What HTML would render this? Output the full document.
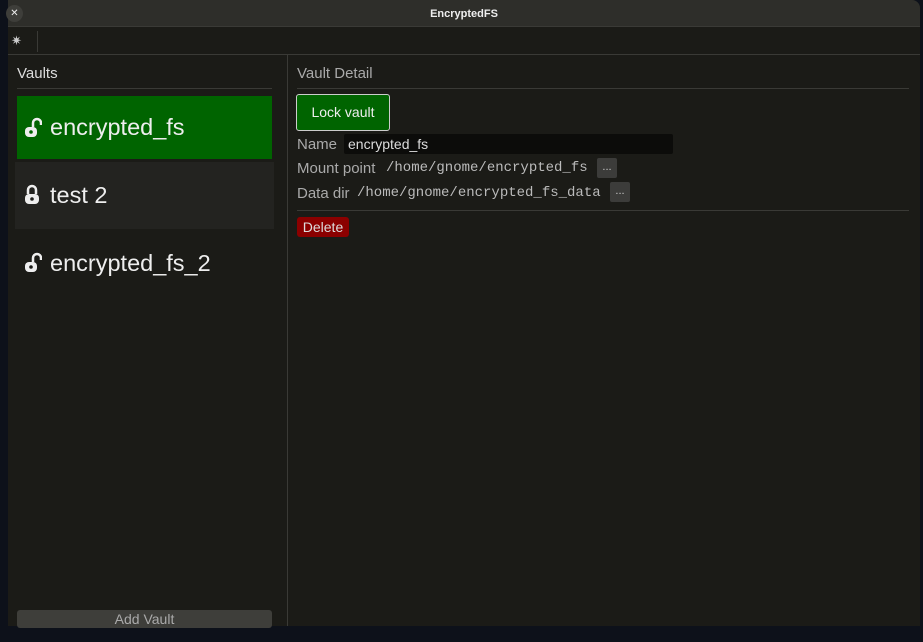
<!DOCTYPE html>
<html><head><meta charset="utf-8"><style>
*{margin:0;padding:0;box-sizing:border-box}
body{width:923px;height:642px;background:#0d111a;position:relative;overflow:hidden;font-family:"Liberation Sans",sans-serif;color:#ddd}
.win{position:absolute;left:8px;top:0;width:912px;height:626px;background:#1b1b17;border-radius:0 8px 0 0}
.tb{position:absolute;left:0;top:0;width:100%;height:27px;background:#2e2e2a;border-bottom:1px solid #3a3a36;text-align:center;font-size:11px;font-weight:bold;line-height:28px;color:#eee;border-radius:0 8px 0 0}
.x{position:absolute;left:-2px;top:5px;width:17px;height:17px;border-radius:50%;background:#3e3e3a;color:#eee;font-size:10px;line-height:17px;text-align:center;font-weight:normal}
.tool{position:absolute;left:0;top:28px;width:100%;height:27px;border-bottom:1px solid #3a3a36}
.abs{position:absolute}
.hl{position:absolute;height:1px;background:#3a3a36}
.lbl{font-size:15px;color:#aaa}
.mono{font-family:"Liberation Mono",monospace;font-size:14px;color:#bbb}
.dots{position:absolute;width:20px;height:20px;background:#3c3c3a;border-radius:2px;color:#ccc;font-size:11px;text-align:center;line-height:18px}
.item{position:absolute;left:9px;width:255px;font-size:23.5px;color:#eee;padding-left:33px}
</style></head><body>
<div class="win">
<div class="tb">EncryptedFS<div class="x">✕</div></div>
<div class="tool"><span class="abs" style="left:3px;top:5px;font-size:13px;color:#ccc">✷</span><div class="abs" style="left:29px;top:3px;width:1px;height:21px;background:#3a3a36"></div></div>
<div class="abs" style="left:279px;top:55px;width:1px;height:571px;background:#3a3a36"></div>
<div class="abs lbl" style="left:9px;top:65px;color:#ddd">Vaults</div>
<div class="hl" style="left:9px;top:88px;width:255px"></div>
<div class="item" style="top:96px;height:63px;background:#006400;line-height:63px">encrypted_fs</div>
<div class="item" style="top:162px;height:67px;background:#232320;line-height:67px;left:7px;width:259px;padding-left:35px">test 2</div>
<div class="item" style="top:230px;height:67px;line-height:67px">encrypted_fs_2</div>
<svg class="abs" style="left:16px;top:117px" width="18" height="22" viewBox="0 0 18 22"><path d="M9 10V6a4 4 0 0 1 8 0v2" fill="none" stroke="#eee" stroke-width="2.5"/><rect x="1" y="10" width="12" height="10" rx="4" fill="#eee"/><circle cx="7" cy="15" r="1.8" fill="#006400"/></svg>
<svg class="abs" style="left:16px;top:184px" width="18" height="22" viewBox="0 0 18 22"><path d="M4 10V6a4 4 0 0 1 8 0v4" fill="none" stroke="#eee" stroke-width="2.5"/><rect x="1" y="10" width="14" height="10" rx="4" fill="#eee"/><circle cx="8" cy="15" r="1.8" fill="#232320"/></svg>
<svg class="abs" style="left:16px;top:252px" width="18" height="22" viewBox="0 0 18 22"><path d="M9 10V6a4 4 0 0 1 8 0v2" fill="none" stroke="#eee" stroke-width="2.5"/><rect x="1" y="10" width="12" height="10" rx="4" fill="#eee"/><circle cx="7" cy="15" r="1.8" fill="#1b1b17"/></svg>
<div class="abs" style="left:9px;top:610px;width:255px;height:18px;background:#3e3e3a;border-radius:3px;text-align:center;font-size:14px;color:#aaa;line-height:19px">Add Vault</div>
<div class="abs lbl" style="left:289px;top:65px">Vault Detail</div>
<div class="hl" style="left:289px;top:88px;width:612px"></div>
<div class="abs" style="left:288px;top:94px;width:94px;height:37px;background:#006400;border:1px solid #ccc;border-radius:3px;text-align:center;line-height:35px;font-size:14px;color:#eee">Lock vault</div>
<div class="abs lbl" style="left:289px;top:136px">Name</div>
<div class="abs" style="left:336px;top:134px;width:329px;height:20px;background:#0c0c0a;border-radius:2px;padding-left:4px;font-size:14px;color:#ddd;line-height:20px">encrypted_fs</div>
<div class="abs lbl" style="left:289px;top:160px">Mount point</div>
<div class="abs mono" style="left:378px;top:160px">/home/gnome/encrypted_fs</div>
<div class="dots" style="left:589px;top:158px">...</div>
<div class="abs lbl" style="left:289px;top:185px">Data dir</div>
<div class="abs mono" style="left:349px;top:185px">/home/gnome/encrypted_fs_data</div>
<div class="dots" style="left:602px;top:182px">...</div>
<div class="hl" style="left:289px;top:210px;width:612px"></div>
<div class="abs" style="left:289px;top:217px;width:52px;height:20px;background:#8b0000;border-radius:3px;text-align:center;line-height:20px;font-size:14px;color:#ddd">Delete</div>
</div>
</body></html>
